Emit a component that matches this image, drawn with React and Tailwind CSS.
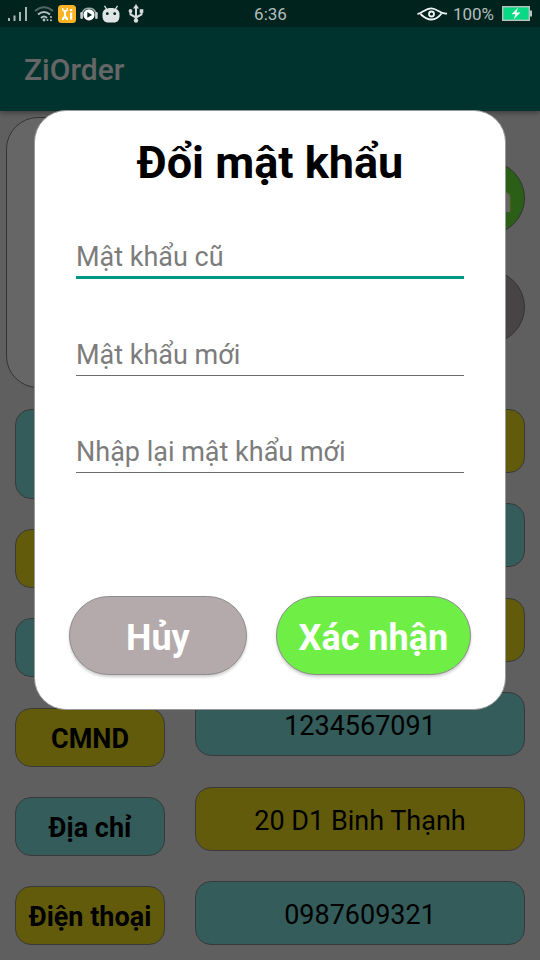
import React from "react";

const TEAL = "bg-[#80e6e1]";
const YELLOW = "bg-[#f5e41e]";

const labels = [
  { text: "", size: "h-[90px]", tone: TEAL },
  { text: "", size: "h-[59px]", tone: YELLOW },
  { text: "", size: "h-[59px]", tone: TEAL },
  { text: "CMND", size: "h-[59px]", tone: YELLOW },
  { text: "Địa chỉ", size: "h-[59px]", tone: TEAL },
  { text: "Điện thoại", size: "h-[59px]", tone: YELLOW },
];

const values = [
  { text: "", tone: YELLOW },
  { text: "", tone: TEAL },
  { text: "", tone: YELLOW },
  { text: "1234567091", tone: TEAL },
  { text: "20 D1 Binh Thạnh", tone: YELLOW },
  { text: "0987609321", tone: TEAL },
];

const fields = [
  { id: "old", hint: "Mật khẩu cũ", line: "border-b-[3px] border-[#009688]" },
  { id: "new", hint: "Mật khẩu mới", line: "border-b border-[#6c6c6c]" },
  { id: "repeat", hint: "Nhập lại mật khẩu mới", line: "border-b border-[#6c6c6c]" },
];

function SignalIcon() {
  return (
    <svg width="20" height="16" viewBox="0 0 20 16" fill="#a9b5b3">
      <rect x="0" y="12" width="2" height="3" />
      <rect x="5.500" y="9.500" width="2" height="5.500" />
      <rect x="11" y="6" width="2" height="9" />
      <rect x="17" y="1" width="2" height="14" />
    </svg>
  );
}

function WifiIcon() {
  return (
    <svg width="20" height="16" viewBox="0 0 20 16" fill="none" strokeWidth="2">
      <path d="M1 5 Q10 -2.5 19 5" stroke="#4f6663" />
      <path d="M4 8.5 Q10 3.5 16 8.5" stroke="#b4bfbd" />
      <path d="M7 12 Q10 9 13 12" stroke="#b4bfbd" />
      <circle cx="10" cy="14" r="1.4" fill="#b4bfbd" />
      <circle cx="13.5" cy="14" r="1" fill="#b4bfbd" />
      <circle cx="17" cy="11" r="1" fill="#b4bfbd" />
      <circle cx="17" cy="14.2" r="1" fill="#b4bfbd" />
    </svg>
  );
}

function ToolsIcon() {
  return (
    <svg width="18" height="18" viewBox="0 0 18 18">
      <rect width="18" height="18" rx="3.5" fill="#fbb326" />
      <path
        d="M4 3 v2.2 L6 7 v4 L4 13 v2 h1.5 l1.5-2 1.5 2 H10 v-2 L8 11 V7 l2-1.8 V3 H8.6 v2 H5.4 V3 Z"
        fill="#fff"
      />
      <rect x="12" y="4" width="2.2" height="2" fill="#fff" />
      <rect x="12" y="7.5" width="2.2" height="7" fill="#fff" />
    </svg>
  );
}

function HeadphoneIcon() {
  return (
    <svg width="18" height="17" viewBox="0 0 18 17">
      <path d="M2.200 8 A7 6.300 0 0 1 15.800 8" fill="none" stroke="#9aa8a6" strokeWidth="1.400" />
      <rect x="0.300" y="7" width="2.600" height="7" rx="1.300" fill="#c8cfce" />
      <rect x="15.100" y="7" width="2.600" height="7" rx="1.300" fill="#c8cfce" />
      <circle cx="9" cy="9.800" r="5.600" fill="#fff" />
      <path d="M7.300 7 L12 9.900 L7.300 12.800 Z" fill="#00231e" />
    </svg>
  );
}

function RobotIcon() {
  return (
    <svg width="18" height="18" viewBox="0 0 18 18">
      <path d="M4.500 4 L2.500 0.800 M13.500 4 L15.500 0.800" stroke="#dfe5e4" strokeWidth="1.300" />
      <path
        d="M0.500 9 C0.500 5 4 3 9 3 C14 3 17.500 5 17.500 9 V11 C17.500 15.500 15 17.500 12 17.500 H6 C3 17.500 0.500 15.500 0.500 11 Z"
        fill="#dfe5e4"
      />
      <circle cx="5.300" cy="8.700" r="1.400" fill="#00231e" />
      <circle cx="12.700" cy="8.700" r="1.400" fill="#00231e" />
    </svg>
  );
}

function UsbIcon() {
  return (
    <svg width="16" height="19" viewBox="0 0 16 19" fill="none" stroke="#d6dddc" strokeWidth="2">
      <path d="M8 3 V15.500 M8 13.500 L2.500 10.500 V7 M8 13.500 L13.500 10.500 V7" />
      <path d="M8 0 L11 4.500 H5 Z" fill="#d6dddc" stroke="none" />
      <circle cx="8" cy="16.500" r="2.200" fill="#d6dddc" stroke="none" />
      <circle cx="2.500" cy="7" r="1.900" fill="#d6dddc" stroke="none" />
      <rect x="11.700" y="5.200" width="3.600" height="3.600" fill="#d6dddc" stroke="none" />
    </svg>
  );
}

function EyeIcon() {
  return (
    <svg width="31" height="14" viewBox="0 0 31 14" fill="none" stroke="#f1f4f3" strokeWidth="1.800">
      <path d="M0.500 7 C5 6.500 8 1.300 14.500 1.300 C20 1.300 23 7.500 30 6.500" />
      <path d="M3.500 7 C7 10.500 10 12.500 14.500 12.500 C18.500 12.500 21.500 10.500 24.500 6.500" />
      <circle cx="14.500" cy="7" r="2.500" />
    </svg>
  );
}

function BatteryIcon() {
  return (
    <svg width="31" height="15" viewBox="0 0 31 15">
      <rect x="0.700" y="0.700" width="26.600" height="13.600" fill="#08d984" stroke="#b9c4c2" strokeWidth="1.400" />
      <rect x="28" y="4.500" width="2" height="6" fill="#b9c4c2" />
      <path d="M16 1.800 L9.500 8.200 H13.500 L11.700 13.200 L18.500 6.600 H14.500 Z" fill="#fff" />
    </svg>
  );
}

function StatusBar() {
  return (
    <header className="relative z-20 grid h-[27px] grid-cols-[1fr_auto_1fr] items-center bg-[#00231e] pr-[7px] pl-2 text-[17px] leading-5 text-[#b3bebc]">
      <div className="flex items-center gap-1">
        <SignalIcon />
        <span className="ml-[2px]">
          <WifiIcon />
        </span>
        <ToolsIcon />
        <HeadphoneIcon />
        <RobotIcon />
        <span className="ml-1">
          <UsbIcon />
        </span>
      </div>
      <span>6:36</span>
      <div className="flex items-center justify-end gap-[5px]">
        <EyeIcon />
        <span>100%</span>
        <span className="ml-[3px]">
          <BatteryIcon />
        </span>
      </div>
    </header>
  );
}

function Profile() {
  return (
    <main className="flex flex-1 flex-col bg-[#ededed] pt-[6px] pb-[15px]">
      <section className="flex justify-between pr-[15px] pl-[6px]">
        <div className="h-[271px] w-[271px] rounded-[32px] border border-[#808080] bg-white" />
        <div className="flex flex-col gap-[35px] pt-[44px]">
          <button
            type="button"
            className="flex h-[74px] w-[195px] items-center justify-end rounded-full border border-[#808080] bg-[#6cee3c] pt-1 pr-3 text-4xl font-bold text-white"
          >
            Chọn
          </button>
          <div className="h-[74px] w-[195px] rounded-full border border-[#808080] bg-[#b4aaac]" />
        </div>
      </section>
      <section className="mt-[21px] flex flex-1 gap-[30px] px-[15px] text-[27px] leading-8 text-black">
        <div className="flex w-[150px] flex-col justify-between">
          {labels.map((item, i) => (
            <div
              key={i}
              className={`flex items-center justify-center rounded-2xl border border-[#909090] pt-1 font-bold whitespace-nowrap ${item.size} ${item.tone}`}
            >
              {item.text}
            </div>
          ))}
        </div>
        <div className="flex flex-1 flex-col justify-between">
          {values.map((item, i) => (
            <div
              key={i}
              className={`flex h-16 items-center justify-center rounded-2xl border border-[#909090] pt-1 ${item.tone}`}
            >
              {item.text}
            </div>
          ))}
        </div>
      </section>
    </main>
  );
}

function PasswordDialog() {
  return (
    <div className="absolute inset-0 z-10 bg-black/60 px-[34px] pt-[110px]">
      <form
        role="dialog"
        aria-labelledby="dialog-title"
        className="rounded-[32px] border border-[#999] bg-white px-[34px] pt-[25px] pb-[34px]"
      >
        <h1 id="dialog-title" className="text-center text-[45px] leading-[54px] font-bold text-black">
          Đổi mật khẩu
        </h1>
        <div className="mt-[39px] flex flex-col gap-[47px] px-[7px]">
          {fields.map((f) => (
            <input
              key={f.id}
              id={f.id}
              type="password"
              aria-label={f.hint}
              placeholder={f.hint}
              className={`h-[50px] w-full bg-transparent pt-2 text-[27px] text-black outline-none placeholder:text-[#7c7c7c] ${f.line}`}
            />
          ))}
        </div>
        <div className="mt-[123px] flex gap-[29px] text-4xl font-bold text-white">
          <button
            type="button"
            className="h-[79px] flex-10 rounded-full border border-[#8c8c8c] bg-[#b4aaac] pt-1 shadow-[0_2px_3px_rgba(0,0,0,0.2)]"
          >
            Hủy
          </button>
          <button
            type="submit"
            className="h-[79px] flex-11 rounded-full border border-[#8c8c8c] bg-[#6fee45] pt-1 shadow-[0_2px_3px_rgba(0,0,0,0.2)]"
          >
            Xác nhận
          </button>
        </div>
      </form>
    </div>
  );
}

export default function App() {
  return (
    <div className="relative flex min-h-screen flex-col font-[Roboto,sans-serif]">
      <StatusBar />
      <div className="relative flex h-[84px] items-center bg-[#008073] px-6 text-[30px] font-medium text-white shadow-[0_2px_5px_rgba(0,0,0,0.35)]">
        ZiOrder
      </div>
      <Profile />
      <PasswordDialog />
    </div>
  );
}
